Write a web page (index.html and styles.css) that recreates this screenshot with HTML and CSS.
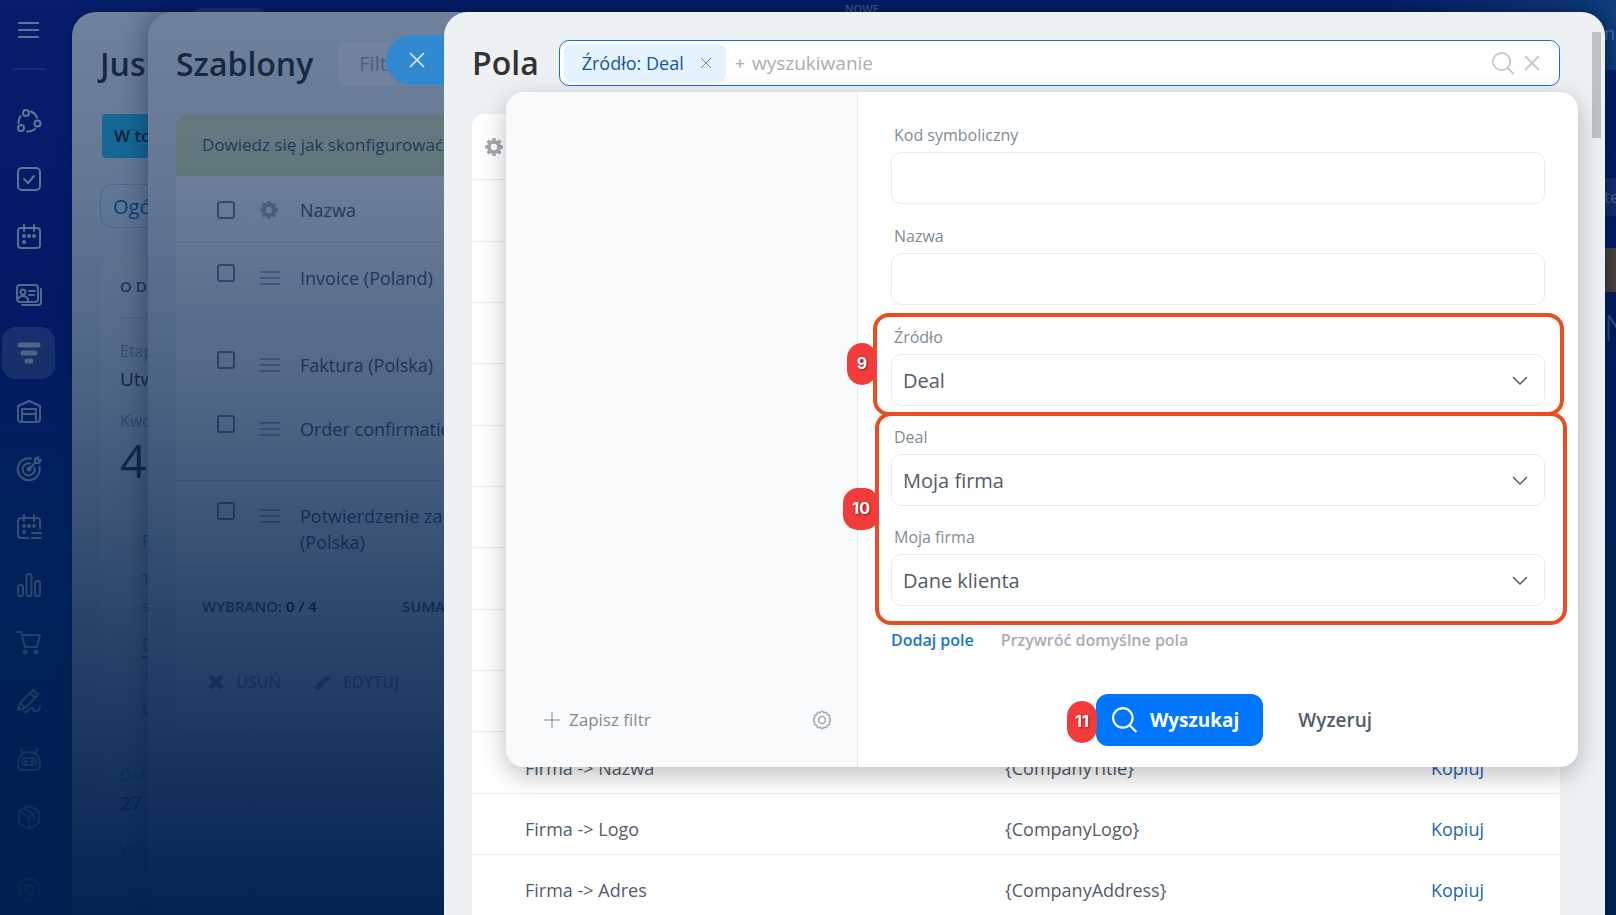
FILE: index.html
```html
<!DOCTYPE html>
<html lang="pl">
<head>
<meta charset="UTF-8">
<meta name="viewport" content="width=device-width, initial-scale=1.0">
<title>Pola</title>
<link rel="stylesheet" href="styles.css">
</head>
<body>
    <div class="desktop">
        <nav class="sidebar" aria-label="Menu">
            <button type="button" class="menu-btn" aria-label="Menu"><svg width="22" height="16" viewBox="0 0 22 16"><path d="M0 1h21M0 8h21M0 15h21"/></svg></button>
            <hr class="side-line">
            <a class="side-item" href="#" aria-label="Współpraca"><svg viewBox="0 0 26 26"><circle cx="10" cy="5" r="3"/><circle cx="21.500" cy="15.500" r="3"/><circle cx="5" cy="20" r="3"/><path d="M4.500 8a11 11 0 0 0-2 7M15 3.500a11 11 0 0 1 6 6M11 23.500a11 11 0 0 0 8-2.500"/></svg></a>
            <a class="side-item" href="#" aria-label="Zadania"><svg viewBox="0 0 26 26"><rect x="2" y="2" width="22" height="22" rx="4"/><path d="M8 13l4 4 6-7"/></svg></a>
            <a class="side-item" href="#" aria-label="Kalendarz"><svg viewBox="0 0 26 26"><rect x="2" y="4" width="22" height="20" rx="3"/><path d="M8 1v6M18 1v6"/><path class="dots" d="M8 12h.1M13 12h.1M18 12h.1M8 18h.1"/></svg></a>
            <a class="side-item" href="#" aria-label="Kontakty"><svg viewBox="0 0 26 26"><rect x="1" y="3" width="21" height="17" rx="3"/><path d="M6 23h16a3 3 0 0 0 3-3V7"/><circle cx="7" cy="10" r="2.500"/><path d="M2 17c2-4 8-4 10 0v2M13 9h6M13 13h5"/></svg></a>
            <a class="side-item active" href="#" aria-label="CRM"><svg viewBox="0 0 26 26"><path class="thick" d="M4 5h18M7 13h12M11 21h4"/></svg></a>
            <a class="side-item" href="#" aria-label="Magazyn"><svg viewBox="0 0 26 26"><path d="M5 24a3 3 0 0 1-3-3V8l11-5 11 5v13a3 3 0 0 1-3 3zM6 24V11h14v13M6 16h14"/></svg></a>
            <a class="side-item" href="#" aria-label="Marketing"><svg viewBox="0 0 26 26"><path d="M15 2.500a11 11 0 1 0 8.500 8.500M14 7.500a6 6 0 1 0 4.500 4.500M13 13l6-6V3l3-2v3h3l-2 3h-4"/><circle cx="13" cy="13" r="1.500"/></svg></a>
            <a class="side-item" href="#" aria-label="Rezerwacja"><svg viewBox="0 0 26 26"><path d="M12 24H5a3 3 0 0 1-3-3V7a3 3 0 0 1 3-3h16a3 3 0 0 1 3 3v7M8 1v6M18 1v6M16 19h10M16 24h10"/><path class="dots" d="M8 12h.1M13 12h.1M18 12h.1M8 18h.1"/></svg></a>
            <a class="side-item" href="#" aria-label="Analityka"><svg viewBox="0 0 26 26"><rect x="2" y="13" width="5" height="11" rx="2"/><rect x="10.500" y="2" width="5" height="22" rx="2"/><rect x="19" y="9" width="5" height="15" rx="2"/></svg></a>
            <a class="side-item" href="#" aria-label="Sklep"><svg viewBox="0 0 26 26"><path d="M1 2h4l4 15h12l3-12H6"/><circle cx="9" cy="22" r="1.500"/><circle cx="20" cy="22" r="1.500"/></svg></a>
            <a class="side-item" href="#" aria-label="Podpis"><svg viewBox="0 0 26 26"><path d="M2 22l2-7L17 2l5 5L9 20zM14 5l5 5M4 15l5 5M8 24c6 0 5-5 8-4s0 4 4 3 4-3 4-5"/></svg></a>
            <a class="side-item" href="#" aria-label="Roboty"><svg viewBox="0 0 26 26"><path d="M2 20c0-9 4-14 11-14s11 5 11 14c0 3-1 4-4 4H6c-3 0-4-1-4-4zM7 8L5 3M19 8l2-5"/><rect x="6" y="12" width="14" height="7" rx="3.500"/><path class="dots" d="M10 15.500h.1M16 15.500h.1"/></svg></a>
            <a class="side-item" href="#" aria-label="Market"><svg viewBox="0 0 26 26"><path d="M13 2l10 5v12l-10 6-10-6V7zM3 7l10 6 10-6M13 13v12M8 4.500l10 5.500v5"/></svg></a>
            <a class="side-item last" href="#" aria-label="Ustawienia"><svg viewBox="0 0 26 26"><use href="#cog"/></svg></a>
        </nav>
        <div class="portal">
            <div class="portal-top"><span class="p-search"></span><span class="p-new">NOWE</span></div>
            <div class="portal-side">
                <span class="p-user">n</span>
                <span class="p-tab">te</span>
                <span class="p-note"></span>
                <span class="p-clock">N</span>
            </div>
        </div>
    </div>

    <svg class="defs" width="0" height="0" aria-hidden="true">
        <symbol id="cog" viewBox="0 0 26 26"><path d="M10.500 3.500Q13 0 15.500 3.500Q19.500 2 20 6Q24 6.500 22.500 10.500Q26 13 22.500 15.500Q24 19.500 20 20Q19.500 24 15.500 22.500Q13 26 10.500 22.500Q6.500 24 6 20Q2 19.500 3.500 15.500Q0 13 3.500 10.500Q2 6.500 6 6Q6.500 2 10.500 3.500Z"/><circle cx="13" cy="13" r="4.500"/></symbol>
        <symbol id="gear" viewBox="0 0 18 18"><path fill-rule="evenodd" d="M7.500 0h3l.4 2.400 1.400.6 2-1.400 2.100 2.100-1.400 2 .6 1.400 2.400.4v3l-2.400.4-.6 1.400 1.400 2-2.100 2.100-2-1.400-1.400.6-.4 2.400h-3l-.4-2.400-1.400-.6-2 1.400-2.100-2.100 1.400-2-.6-1.400L0 10.500v-3l2.400-.4.6-1.400-1.400-2 2.100-2.100 2 1.400 1.400-.6zM9 5.800a3.200 3.200 0 1 0 0 6.400 3.200 3.200 0 0 0 0-6.400z"/></symbol>
        <symbol id="loupe" viewBox="0 0 24 24"><circle cx="10" cy="10" r="9"/><path d="M16.500 17l6 6"/></symbol>
        <symbol id="chevron" viewBox="0 0 16 10"><path d="M1 1l7 7 7-7"/></symbol>
    </svg>

    <section class="slider slider-deal">
        <h2 class="title">Jus</h2>
        <div class="stage">W to</div>
        <div class="tab">Ogó</div>
        <div class="card">
            <h3>O DE</h3>
            <p class="name">Etap</p>
            <p class="value">Utw</p>
            <p class="name">Kwo</p>
            <p class="sum">4</p>
            <div class="inner">
                <p>P</p>
                <p>T<br>s</p>
                <p><span class="dashed">D</span></p>
                <p class="last">Ł</p>
            </div>
            <p class="name">Data</p>
            <p class="value">27</p>
            <p class="name more"><span class="dashed">Wyl</span></p>
        </div>
    </section>

    <section class="slider slider-templates">
        <header class="tpl-head">
            <h2 class="title">Szablony</h2>
            <div class="tpl-filter">Filtr</div>
        </header>
        <div class="banner">Dowiedz się jak skonfigurować</div>
        <div class="tpl-card">
            <table class="tpl-table">
                <thead>
                    <tr><th class="c-check"><input type="checkbox" aria-label="Zaznacz wszystko"></th><th class="c-drag"><svg class="gear" width="18" height="18"><use href="#gear"/></svg></th><th>Nazwa</th></tr>
                </thead>
                <tbody>
                    <tr class="tall"><td class="c-check"><input type="checkbox" aria-label="Invoice (Poland)"></td><td class="c-drag"><svg width="20" height="14"><path d="M0 1h20M0 7h20M0 13h20"/></svg></td><td>Invoice (Poland)</td></tr>
                    <tr><td class="c-check"><input type="checkbox" aria-label="Faktura (Polska)"></td><td class="c-drag"><svg width="20" height="14"><path d="M0 1h20M0 7h20M0 13h20"/></svg></td><td>Faktura (Polska)</td></tr>
                    <tr class="tall"><td class="c-check"><input type="checkbox" aria-label="Order confirmation"></td><td class="c-drag"><svg width="20" height="14"><path d="M0 1h20M0 7h20M0 13h20"/></svg></td><td>Order confirmation</td></tr>
                    <tr class="tall"><td class="c-check"><input type="checkbox" aria-label="Potwierdzenie zamówienia"></td><td class="c-drag"><svg width="20" height="14"><path d="M0 1h20M0 7h20M0 13h20"/></svg></td><td>Potwierdzenie za<br>(Polska)</td></tr>
                </tbody>
            </table>
            <div class="totals"><span>WYBRANO: <b>0 / 4</b></span><span>SUMA</span></div>
            <div class="actions">
                <button type="button"><svg width="16" height="16" viewBox="0 0 16 16"><path d="M2 2l12 12M14 2L2 14" stroke-width="5"/></svg>USUŃ</button>
                <button type="button"><svg width="16" height="16" viewBox="0 0 16 16"><path d="M3 13L13 3" stroke-width="5"/><path d="M0 16l1-5 4 4z" stroke="none" fill="currentColor"/></svg>EDYTUJ</button>
            </div>
        </div>
    </section>

    <div class="overlay"></div>

    <section class="slider slider-fields">
        <button type="button" class="close-tab" aria-label="Zamknij"><svg width="16" height="16" viewBox="0 0 16 16"><path d="M1 1l14 14M15 1L1 15"/></svg></button>
        <div class="fields-page">
            <header class="fields-head">
                <h1 class="title">Pola</h1>
                <div class="search">
                    <span class="tag">Źródło: Deal <button type="button" aria-label="Usuń"><svg width="12" height="12" viewBox="0 0 12 12"><path d="M1 1l10 10M11 1L1 11"/></svg></button></span>
                    <span class="plus">+</span>
                    <input type="text" placeholder="wyszukiwanie" aria-label="wyszukiwanie">
                    <svg class="s-icon" width="23" height="23"><use href="#loupe"/></svg>
                    <svg class="s-icon" width="16" height="16" viewBox="0 0 16 16"><path d="M1 1l14 14M15 1L1 15"/></svg>
                </div>
            </header>
            <table class="grid">
                <thead>
                    <tr><th class="g-gear"><svg class="gear" width="18" height="18"><use href="#gear"/></svg></th><th></th><th></th></tr>
                </thead>
                <tbody>
                    <tr><td></td><td></td><td></td></tr>
                    <tr><td></td><td></td><td></td></tr>
                    <tr><td></td><td></td><td></td></tr>
                    <tr><td></td><td></td><td></td></tr>
                    <tr><td></td><td></td><td></td></tr>
                    <tr><td></td><td></td><td></td></tr>
                    <tr><td></td><td></td><td></td></tr>
                    <tr><td></td><td></td><td></td></tr>
                    <tr><td></td><td></td><td></td></tr>
                    <tr><td>Firma -&gt; Nazwa</td><td>{CompanyTitle}</td><td><a href="#">Kopiuj</a></td></tr>
                    <tr><td>Firma -&gt; Logo</td><td>{CompanyLogo}</td><td><a href="#">Kopiuj</a></td></tr>
                    <tr><td>Firma -&gt; Adres</td><td>{CompanyAddress}</td><td><a href="#">Kopiuj</a></td></tr>
                </tbody>
            </table>
        </div>
        <div class="scrollbar"></div>

        <form class="filter">
            <div class="presets">
                <button type="button" class="save"><svg width="16" height="16" viewBox="0 0 16 16"><path d="M8 0v16M0 8h16"/></svg>Zapisz filtr</button>
                <button type="button" class="cog" aria-label="Ustawienia filtra"><svg width="20" height="20" viewBox="0 0 26 26"><use href="#cog"/></svg></button>
            </div>
            <div class="filter-body">
                <div class="field">
                    <label for="code">Kod symboliczny</label>
                    <input type="text" id="code">
                </div>
                <div class="field">
                    <label for="name">Nazwa</label>
                    <input type="text" id="name">
                </div>
                <div class="step step-9">
                    <div class="field">
                        <label for="source">Źródło</label>
                        <div class="select"><select id="source"><option>Deal</option></select><svg width="16" height="10"><use href="#chevron"/></svg></div>
                    </div>
                    <span class="badge">9</span>
                </div>
                <div class="step step-10">
                    <div class="field">
                        <label for="deal">Deal</label>
                        <div class="select"><select id="deal"><option>Moja firma</option></select><svg width="16" height="10"><use href="#chevron"/></svg></div>
                    </div>
                    <div class="field">
                        <label for="company">Moja firma</label>
                        <div class="select"><select id="company"><option>Dane klienta</option></select><svg width="16" height="10"><use href="#chevron"/></svg></div>
                    </div>
                    <span class="badge">10</span>
                </div>
                <div class="links"><a href="#">Dodaj pole</a><a href="#" class="muted">Przywróć domyślne pola</a></div>
                <div class="buttons">
                    <button type="submit" class="btn-find"><svg width="26" height="26"><use href="#loupe"/></svg>Wyszukaj<span class="badge">11</span></button>
                    <button type="reset" class="btn-reset">Wyzeruj</button>
                </div>
            </div>
        </form>
    </section>
</body>
</html>
```
FILE: styles.css
```css
*{box-sizing:border-box;}
:root{
    --shade:0,32,78;
    --blue:#0075ff;
    --mark:#e84e22;
    --text:#525c69;
}
body{
    margin:0;
    height:100vh;
    position:relative;
    overflow:hidden;
    font-family:"Open Sans","Noto Sans",sans-serif;
    font-size:18px;
    line-height:26px;
    color:var(--text);
}
button,input,select{font:inherit;color:inherit;}
button{border:none;background:none;padding:0;cursor:pointer;}
a{text-decoration:none;}
p,h1,h2,h3{margin:0;}
svg{display:block;flex:none;fill:none;stroke:currentColor;stroke-width:2;}
.defs{position:absolute;}
.gear{fill:currentColor;stroke:none;}
.title{
    font-size:32px;
    line-height:46px;
    font-weight:600;
    color:#333;
}

/* portal behind the sliders */
.desktop{
    display:flex;
    height:100%;
    background:linear-gradient(180deg,#0c1a8e 0%,#050f8a 35%,#002b86 65%,#001c80 100%);
    color:#fff;
}
.sidebar{
    width:72px;
    padding:19px 0 0 2px;
    display:flex;
    flex-direction:column;
    align-items:flex-start;
    gap:6px;
}
.menu-btn{width:53px;height:22px;display:grid;place-items:center;opacity:.8;}
.side-line{
    width:34px;
    margin:21px 0 19px 10px;
    border:none;
    border-top:2px solid rgba(255,255,255,.15);
}
.side-item{
    width:53px;
    height:52px;
    border-radius:14px;
    display:grid;
    place-items:center;
    color:rgba(255,255,255,.9);
}
.side-item svg{width:26px;height:26px;stroke-linecap:round;stroke-linejoin:round;}
.side-item .dots{stroke-width:4;}
.side-item .thick{stroke-width:5;}
.side-item.active{background:rgba(255,255,255,.25);}
.side-item.last{margin-top:14px;}
.portal{
    flex:1;
    background:linear-gradient(90deg,transparent 85%,#1f62b8 100%) top/100% 70px no-repeat;
}
.portal-top{
    display:flex;
    padding-left:120px;
    height:18px;
    font-size:11px;
    line-height:18px;
    font-weight:600;
    color:rgba(255,255,255,.6);
}
.p-search{
    width:75px;
    height:10px;
    margin-top:8px;
    border-radius:10px 10px 0 0;
    background:rgba(255,255,255,.2);
}
.p-new{margin-left:578px;}
.portal-side{
    width:12px;
    margin-left:auto;
    display:flex;
    flex-direction:column;
    overflow:hidden;
    color:rgba(255,255,255,.7);
}
.p-user{height:30px;line-height:30px;}
.p-tab{margin-top:130px;height:38px;line-height:38px;font-size:17px;background:rgba(255,255,255,.18);}
.p-note{margin-top:32px;height:44px;background:#c88225;}
.p-clock{margin-top:12px;font-size:36px;line-height:48px;font-weight:300;}

/* sliders */
.slider{
    position:absolute;
    top:12px;
    right:11px;
    bottom:0;
    background:#edf1f4;
    border-radius:24px 24px 0 0;
}
.slider-deal{
    left:72px;
    padding:29px 28px 0;
    box-shadow:0 0 12px rgba(0,0,0,.4);
}
.slider-deal .title{margin-bottom:27px;}
.stage{
    height:44px;
    margin-left:2px;
    padding-left:12px;
    border-radius:4px;
    line-height:44px;
    font-size:17px;
    font-weight:600;
    color:#222;
    background:#2fc6f6;
}
.tab{
    height:44px;
    margin:26px 0 28px;
    padding-left:12px;
    border:1px solid #a5d3ee;
    border-radius:12px;
    background:#e6f2f8;
    font-size:20px;
    line-height:44px;
    color:#0b66c3;
}
.card{
    padding:17px 20px 0;
    height:640px;
    border-radius:14px;
    background:#f5f7f9;
}
.card h3{
    padding-bottom:18px;
    margin-bottom:20px;
    border-bottom:1px solid #d5dade;
    font-size:15px;
    font-weight:600;
    line-height:26px;
}
.card .name{font-size:16px;color:#9aa3ad;}
.card .value{font-size:19px;line-height:30px;color:#333;margin-bottom:14px;}
.card .sum{font-size:46px;line-height:52px;color:#333;}
.inner{
    margin:18px 0 38px;
    padding:24px 22px 0;
    height:220px;
    border-radius:12px;
    background:#fafbfc;
    font-size:16px;
    color:#8a939d;
}
.inner p{margin-bottom:13px;}
.inner .last{padding-top:24px;}
.card .more{margin-top:18px;}
.dashed{border-bottom:2px dashed currentColor;}

.slider-templates{
    left:148px;
    padding:29px 28px 0;
    box-shadow:0 0 30px rgba(0,0,0,.45);
}
.tpl-head{display:flex;gap:24px;align-items:center;margin-bottom:27px;}
.tpl-filter{
    flex:1;
    height:44px;
    padding-left:22px;
    border-radius:10px;
    font-size:20px;
    line-height:44px;
    color:#a8adb4;
    background:#f7f8fa;
}
.banner{
    padding:18px 26px;
    border-radius:12px 12px 0 0;
    background:#e4ecbf;
    font-size:17px;
    white-space:nowrap;
}
.tpl-card{background:#fff;border-radius:0 0 12px 12px;padding-bottom:14px;}
.tpl-table{width:100%;border-collapse:collapse;table-layout:fixed;}
.tpl-table th{height:66px;padding:2px 0 0;text-align:left;font-weight:400;border-bottom:1px solid #e4e8eb;}
.tpl-table td{height:64px;padding:22px 0 0;vertical-align:top;border-bottom:1px solid #e4e8eb;}
.tpl-table .tall td{height:87px;}
.tpl-table .c-check{width:84px;padding-left:41px;}
.tpl-table td.c-check{padding-top:21px;}
.tpl-table .c-drag{width:40px;}
.tpl-table td.c-drag{padding-top:28px;}
.c-drag svg{color:#b0b8c0;}
.tpl-table input{
    display:block;
    width:18px;
    height:18px;
    margin:0;
    appearance:none;
    border:2px solid #7d8793;
    border-radius:3px;
}
.totals{
    display:grid;
    grid-template-columns:200px 1fr;
    padding:25px 26px;
    font-size:15px;
    font-weight:600;
}
.totals b{color:#111;font-weight:600;}
.actions{display:flex;gap:34px;padding:25px 32px;font-weight:600;font-size:16px;color:#959ca4;}
.actions button{display:flex;align-items:center;gap:12px;}

.overlay{
    position:absolute;
    inset:0;
    background:linear-gradient(180deg,rgba(var(--shade),.53) 0,rgba(var(--shade),.58) 20%,rgba(var(--shade),.69) 44%,rgba(var(--shade),.82) 66%,rgba(var(--shade),.99) 100%);
}

/* fields slider */
.slider-fields{left:444px;}
.fields-page{height:100%;overflow:hidden;padding:28px 45px 0 28px;border-radius:24px 24px 0 0;}
.close-tab{
    position:absolute;
    top:23px;
    right:100%;
    width:58px;
    height:50px;
    padding-left:4px;
    display:grid;
    place-items:center;
    border-radius:25px 0 0 25px;
    background:#3189d2;
    color:#e3f0fa;
}
.close-tab svg{stroke-width:1;stroke-width:1.5;}
.fields-head{display:flex;align-items:center;gap:20px;margin-bottom:28px;}
.search{
    flex:1;
    height:46px;
    padding:0 19px 0 4px;
    display:flex;
    align-items:center;
    border:1px solid #1a6fd0;
    border-radius:10px;
    background:#fff;
    font-size:19px;
}
.tag{
    height:38px;
    padding:0 14px 0 18px;
    display:flex;
    align-items:center;
    gap:16px;
    border-radius:8px;
    background:#e5f3ff;
    font-size:18px;
    white-space:nowrap;
    color:#1553a4;
}
.tag button{color:#5b8cd0;}
.tag svg{stroke-width:1;}
.plus{padding:0 7px 0 9px;font-size:18px;color:#a8adb4;}
.search input{
    flex:1;
    min-width:0;
    border:none;
    outline:none;
    padding:0;
    background:none;
}
.search input::placeholder{color:#a8adb4;}
.s-icon{margin-left:9px;color:#c6cbd0;}
.grid{
    width:100%;
    border-spacing:0;
    table-layout:fixed;
    background:#fff;
    border-radius:12px 12px 0 0;
}
.grid th{height:66px;padding:0 13px;border-bottom:1px solid #edeef0;}
.grid th .gear{color:#a3a9b0;}
.grid th:nth-child(1){width:533px;}
.grid th:nth-child(2){width:426px;}
.grid td{height:61px;padding:10px 0 0;border-bottom:1px solid #edeef0;}
.grid tr:nth-child(3n+1) td{height:62px;}
.grid td:first-child{padding-left:53px;}
.grid a{color:#2067b0;}
.scrollbar{
    position:absolute;
    top:20px;
    right:4px;
    width:9px;
    height:106px;
    background:#bcc0c1;
}

/* filter popup */
.filter{
    position:absolute;
    top:80px;
    left:62px;
    right:27px;
    display:flex;
    border-radius:18px;
    background:#fff;
    box-shadow:0 8px 26px rgba(0,0,0,.25);
}
.presets{
    width:352px;
    padding:0 25px 32px 38px;
    display:flex;
    align-items:flex-end;
    justify-content:space-between;
    border-right:1px solid #e8ebee;
    border-radius:18px 0 0 18px;
    background:#f9fafc;
    font-size:17px;
    color:#828b95;
}
.presets button{display:flex;align-items:center;gap:9px;height:30px;}
.presets svg{stroke-width:1;}
.presets .cog svg{stroke-width:2;color:#a3a9b0;}
.filter-body{flex:1;padding:31px 33px 21px;}
.field{height:101px;}
.field label{
    display:block;
    padding-left:3px;
    margin-bottom:5px;
    font-size:16px;
    line-height:24px;
    color:#828b95;
}
.step .field{height:100px;}
.field input,.field select{
    display:block;
    width:100%;
    height:52px;
    padding:2px 11px 0;
    border:1px solid #e9ebee;
    border-radius:10px;
    outline:none;
    appearance:none;
    background:#fff;
    font-size:20px;
}
.select{position:relative;}
.select svg{position:absolute;right:17px;top:22px;stroke-width:1.5;pointer-events:none;}
.step{position:relative;}
.step::before{
    content:"";
    position:absolute;
    border:4px solid var(--mark);
    border-radius:16px;
    pointer-events:none;
}
.step-9::before{inset:-12px -19px 9px -18px;}
.step-10::before{inset:-13px -22px 0 -16px;}
.badge{
    position:absolute;
    min-width:30px;
    height:42px;
    padding:0 8px;
    border-radius:15px;
    background:#f23b3b;
    color:#fff;
    font-family:Inter,sans-serif;
    font-size:16px;
    line-height:40px;
    font-weight:700;
    text-align:center;
    text-shadow:1px 1px 2px rgba(0,0,0,.5);
}
.step-9 .badge{right:calc(100% + 14px);top:18px;}
.step-10 .badge{right:calc(100% + 12px);top:63px;padding:0 9px;}
.links{display:flex;gap:27px;padding-top:2px;font-size:16px;font-weight:600;}
.links a{color:#1872d9;}
.links .muted{color:#a8adb4;}
.buttons{
    display:flex;
    align-items:center;
    justify-content:center;
    gap:35px;
    padding-left:32px;
    margin-top:41px;
    font-weight:600;
    font-size:19px;
}
.btn-find{
    position:relative;
    height:52px;
    padding:0 24px 0 16px;
    display:flex;
    align-items:center;
    gap:12px;
    border-radius:12px;
    background:var(--blue);
    color:#fff;
    font-weight:700;
}
.btn-find .badge{right:calc(100% - 1px);top:7px;}
```
